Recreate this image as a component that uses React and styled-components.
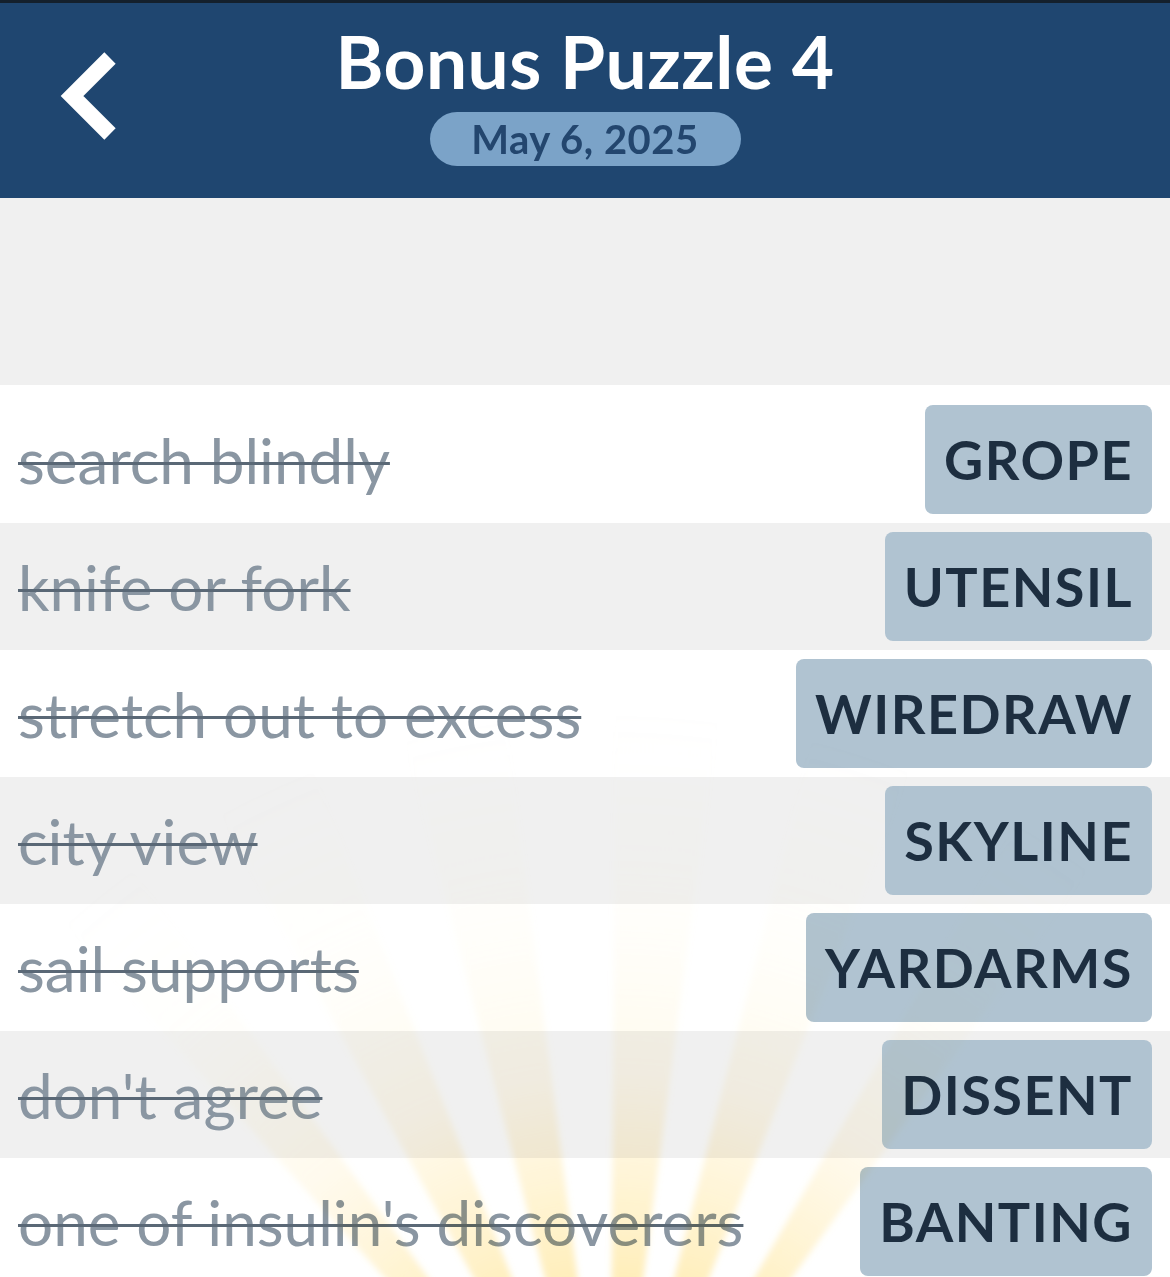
import styled, { createGlobalStyle } from "styled-components"

const GlobalStyle = createGlobalStyle`
  html, body {
    margin: 0;
    padding: 0;
    background: #f0f0f0;
  }
  body {
    font-family: "Lato", "Liberation Sans", sans-serif;
    overflow: hidden;
  }
`

const Page = styled.div`
  width: 1170px;
  height: 1277px;
  overflow: hidden;
  display: flex;
  flex-direction: column;
  background: #f0f0f0;
`

const Header = styled.header`
  position: relative;
  height: 195px;
  flex-shrink: 0;
  border-top: 3px solid #14202c;
  background: #1f4670;
  display: flex;
  flex-direction: column;
  align-items: center;
`

const BackButton = styled.button`
  position: absolute;
  left: 52px;
  top: 40px;
  width: 76px;
  height: 110px;
  padding: 0;
  border: none;
  background: none;
  cursor: pointer;
`

const Title = styled.h1`
  margin: 20px 0 0;
  font-size: 73px;
  line-height: 76px;
  font-weight: 700;
  color: #ffffff;
  letter-spacing: 0.5px;
`

const DateChip = styled.div`
  margin-top: 13px;
  width: 311px;
  height: 54px;
  border-radius: 27px;
  background: #7ba3c8;
  color: #23466e;
  font-size: 40px;
  font-weight: 700;
  display: flex;
  align-items: center;
  justify-content: center;
  letter-spacing: 0.5px;
`

const Spacer = styled.div`
  height: 187px;
  flex-shrink: 0;
  background: #f0f0f0;
`

const List = styled.div`
  position: relative;
  flex: 1;
  padding-top: 11px;
  background: #ffffff;
`

const Row = styled.div`
  height: 127px;
  padding: 0 18px;
  display: flex;
  align-items: center;
  justify-content: space-between;
  background: ${(p) => (p.$shaded ? "#f0f0f0" : "#ffffff")};
`

const Clue = styled.span`
  font-size: 62px;
  font-weight: 400;
  color: #8a96a2;
  text-decoration: line-through;
  text-decoration-color: #5a6876;
  text-decoration-thickness: 3px;
  white-space: nowrap;
`

const Answer = styled.span`
  height: 109px;
  padding: 0 19px;
  border-radius: 8px;
  background: #b0c3d1;
  color: #1d2e40;
  font-size: 54px;
  font-weight: 700;
  letter-spacing: 1.5px;
  display: flex;
  align-items: center;
`

const Rays = styled.svg`
  position: absolute;
  left: 0;
  bottom: 0;
  pointer-events: none;
  mix-blend-mode: multiply;
`

const words = [
  ["search blindly", "GROPE"],
  ["knife or fork", "UTENSIL"],
  ["stretch out to excess", "WIREDRAW"],
  ["city view", "SKYLINE"],
  ["sail supports", "YARDARMS"],
  ["don't agree", "DISSENT"],
  ["one of insulin's discoverers", "BANTING"],
]

// sun rays fanning up from a point below the list
const CX = 610
const CY = 1135
const rayAngles = [-39, -25, -11, 4, 18, 33]

function wedge(angle, half) {
  const R = 1400
  const rad = (d) => (d * Math.PI) / 180
  const a1 = rad(angle - half)
  const a2 = rad(angle + half)
  return `${CX},${CY} ${CX + R * Math.sin(a1)},${CY - R * Math.cos(a1)} ${CX + R * Math.sin(a2)},${CY - R * Math.cos(a2)}`
}

function Sunburst() {
  return (
    <Rays width="1170" height="892" viewBox="0 0 1170 892">
      <defs>
        <radialGradient id="glow" gradientUnits="userSpaceOnUse" cx={CX} cy={CY} r="820">
          <stop offset="0" stopColor="#ffd660" stopOpacity="0.8" />
          <stop offset="0.3" stopColor="#ffdc74" stopOpacity="0.5" />
          <stop offset="0.55" stopColor="#ffe59a" stopOpacity="0.18" />
          <stop offset="0.8" stopColor="#ffefc4" stopOpacity="0.04" />
          <stop offset="1" stopColor="#fff4d6" stopOpacity="0" />
        </radialGradient>
        <filter id="soft" x="-10%" y="-10%" width="120%" height="120%">
          <feGaussianBlur stdDeviation="3" />
        </filter>
      </defs>
      <g filter="url(#soft)">
        {rayAngles.map((a) => (
          <polygon key={a} points={wedge(a, Math.abs(a) > 30 ? 3 : 3.6)} fill="url(#glow)" />
        ))}
      </g>
    </Rays>
  )
}

export default function App() {
  return (
    <>
      <GlobalStyle />
      <Page>
        <Header>
          <BackButton aria-label="Back">
            <svg width="76" height="110" viewBox="52 40 76 110">
              <polyline
                points="110,55 72,93 110,131"
                fill="none"
                stroke="#ffffff"
                strokeWidth="16"
                strokeLinejoin="miter"
              />
            </svg>
          </BackButton>
          <Title>Bonus Puzzle 4</Title>
          <DateChip>May 6, 2025</DateChip>
        </Header>
        <Spacer />
        <List>
          {words.map(([clue, answer], i) => (
            <Row key={answer} $shaded={i % 2 === 1}>
              <Clue>{clue}</Clue>
              <Answer>{answer}</Answer>
            </Row>
          ))}
          <Sunburst />
        </List>
      </Page>
    </>
  )
}
